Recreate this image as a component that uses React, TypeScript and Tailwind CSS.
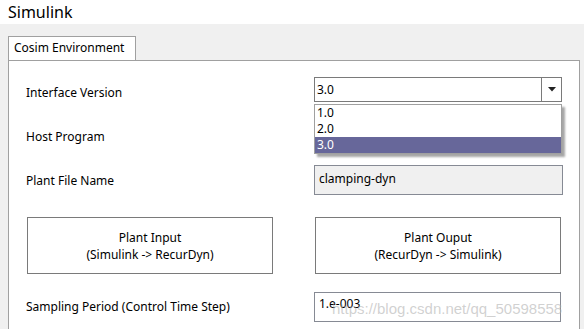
const font = { fontFamily: '"Noto Sans", "Open Sans", sans-serif' };

function Dropdown() {
  return (
    <div className="relative w-[248px] h-[25px]">
      <div className="flex h-full border border-[#7a7a7a] bg-white">
        <div className="flex-1 pl-[2px] text-[12px] leading-[23px] text-black">3.0</div>
        <div className="w-[20px] border-l border-[#7a7a7a] flex items-center justify-center">
          <svg width="8" height="5" viewBox="0 0 8 5">
            <path d="M0 0h8L4 4.5z" fill="#222" />
          </svg>
        </div>
      </div>
      <div className="absolute left-0 top-[27px] w-[248px] border border-[#a0a0a0] bg-white shadow-[3px_3px_2px_rgba(0,0,0,0.35)] z-10">
        <div className="h-[16px] pl-[2px] text-[12px] leading-[16px] text-black">1.0</div>
        <div className="h-[16px] pl-[2px] text-[12px] leading-[16px] text-black">2.0</div>
        <div className="h-[16px] pl-[2px] text-[12px] leading-[16px] text-white bg-[#67679a]">3.0</div>
      </div>
    </div>
  );
}

function PlantButton({ title, sub }: { title: string; sub: string }) {
  return (
    <div className="w-[246px] h-[57px] border border-[#7a7a7a] bg-white flex flex-col items-center justify-center text-[12px] leading-[17px] text-black">
      <span>{title}</span>
      <span>{sub}</span>
    </div>
  );
}

export default function App() {
  return (
    <div className="relative w-[584px] h-[329px] overflow-hidden bg-[#f0f0f0]" style={font}>
      <div className="h-[24px] bg-white pl-[8px] text-[16px] leading-[24px] text-black">Simulink</div>

      <div className="pl-[8px] pr-[4px] pt-[12px]">
        <div className="w-[128px] h-[24px] bg-white border border-b-0 border-[#a0a0a0] pl-[5px] text-[12px] leading-[22px] text-black">
          Cosim Environment
        </div>
        <div className="h-[300px] bg-white border-l border-r border-t border-[#a0a0a0] pl-[17px]">
          <div className="flex mt-[16px]">
            <div className="w-[288px] pt-[8px] text-[12px] leading-[16px] text-black">Interface Version</div>
            <Dropdown />
          </div>

          <div className="mt-[27px] h-[16px] text-[12px] leading-[16px] text-black">Host Program</div>

          <div className="flex mt-[20px]">
            <div className="w-[288px] pt-[8px] text-[12px] leading-[16px] text-black">Plant File Name</div>
            <div className="w-[249px] h-[30px] border border-[#868a94] bg-[#f0f0f0] pl-[4px] text-[12px] leading-[26px] text-black">
              clamping-dyn
            </div>
          </div>

          <div className="flex mt-[22px] pl-[1px] gap-[42px]">
            <PlantButton title="Plant Input" sub="(Simulink -> RecurDyn)" />
            <PlantButton title="Plant Ouput" sub="(RecurDyn -> Simulink)" />
          </div>

          <div className="flex mt-[18px]">
            <div className="w-[288px] pt-[7px] text-[12px] leading-[16px] text-black">Sampling Period (Control Time Step)</div>
            <div className="w-[247px] h-[30px] border border-[#868a94] bg-white pl-[4px] text-[12px] leading-[22px] text-black">
              1.e-003
            </div>
          </div>
        </div>
      </div>

      <div
        className="absolute left-[332px] top-[299px] text-[15px] leading-[20px] text-[rgba(170,170,170,0.55)] pointer-events-none"
        style={{ fontFamily: '"Liberation Sans", Arial, sans-serif' }}
      >
        https://blog.csdn.net/qq_50598558
      </div>
    </div>
  );
}
